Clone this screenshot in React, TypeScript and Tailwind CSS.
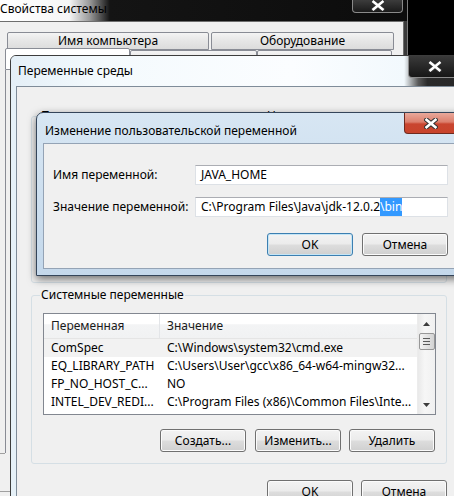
import React from 'react';

const FONT = "font-['Noto_Sans','Open_Sans',sans-serif]";

function CloseGlyph() {
  return (
    <svg width="14" height="11" viewBox="0 0 14 11">
      <path d="M2.5 1.8 L11.5 9.2 M11.5 1.8 L2.5 9.2" stroke="#2f2f2f" strokeWidth="4.6" strokeLinecap="square" />
      <path d="M2.5 1.8 L11.5 9.2 M11.5 1.8 L2.5 9.2" stroke="#ffffff" strokeWidth="2.6" strokeLinecap="square" />
    </svg>
  );
}

function Btn({ label, focused = false, className = '' }: { label: string; focused?: boolean; className?: string }) {
  return (
    <div
      className={`flex h-[23px] w-[86px] items-center justify-center rounded-[3px] border bg-[linear-gradient(180deg,#f3f3f3_0%,#ebebeb_48%,#dddddd_52%,#cfcfcf_100%)] text-[12px] leading-none text-black ${
        focused ? 'border-[#3c7fb1] shadow-[inset_0_0_0_1px_#c4e5f6]' : 'border-[#707070] shadow-[inset_0_0_0_1px_#fbfbfb]'
      } ${className}`}
    >
      {label}
    </div>
  );
}

function Group({ title, className = '', children }: { title: string; className?: string; children?: React.ReactNode }) {
  return (
    <div className={`relative rounded-[3px] border border-[#d5dfe5] ${className}`}>
      <span className="absolute left-[8px] top-[-9px] bg-[#f0f0f0] px-[1px] text-[12px] leading-[16px] text-black">{title}</span>
      {children}
    </div>
  );
}

const rows = [
  { name: 'ComSpec', value: 'C:\\Windows\\system32\\cmd.exe', hot: true },
  { name: 'EQ_LIBRARY_PATH', value: 'C:\\Users\\User\\gcc\\x86_64-w64-mingw32...' },
  { name: 'FP_NO_HOST_C...', value: 'NO' },
  { name: 'INTEL_DEV_REDI...', value: 'C:\\Program Files (x86)\\Common Files\\Inte...' },
];

function VarList() {
  return (
    <div className="flex h-[102px] w-[393px] border border-[#828790] bg-white">
      <div className="flex flex-1 flex-col overflow-hidden">
        <div className="flex h-[25px] shrink-0 items-center border-b border-[#e5e5e5] bg-[linear-gradient(180deg,#ffffff_0%,#ffffff_40%,#f3f4f5_45%,#f1f2f3_100%)] text-[12px] text-[#1a1a1a]">
          <div className="flex h-full w-[116px] items-center border-r border-[#e3e5e8] pl-[7px]">Переменная</div>
          <div className="pl-[7px]">Значение</div>
        </div>
        {rows.map((r) => (
          <div key={r.name} className={`flex h-[18px] shrink-0 items-center whitespace-nowrap text-[12px] text-black ${r.hot ? 'bg-[#f2f2f2]' : ''}`}>
            <div className="w-[116px] pl-[7px]">{r.name}</div>
            <div className="pl-[7px]">{r.value}</div>
          </div>
        ))}
      </div>
      <div className="flex w-[18px] flex-col items-center border-l border-[#ececec] bg-[linear-gradient(90deg,#e9e9e9,#f6f6f6_40%,#f0f0f0)]">
        <div className="flex h-[19px] w-full items-center justify-center">
          <svg width="7" height="4" viewBox="0 0 7 4"><path d="M0 4 L3.5 0 L7 4 Z" fill="#3c3c3c" /></svg>
        </div>
        <div className="flex h-[17px] w-[16px] flex-col items-center justify-center gap-[2px] rounded-[2px] border border-[#979797] bg-[linear-gradient(90deg,#f3f3f3,#e3e3e3_50%,#d3d3d3)]">
          <div className="h-px w-[7px] bg-[#5a5a5a]" />
          <div className="h-px w-[7px] bg-[#5a5a5a]" />
          <div className="h-px w-[7px] bg-[#5a5a5a]" />
        </div>
        <div className="flex-1" />
        <div className="flex h-[19px] w-full items-center justify-center">
          <svg width="7" height="4" viewBox="0 0 7 4"><path d="M0 0 L7 0 L3.5 4 Z" fill="#3c3c3c" /></svg>
        </div>
      </div>
    </div>
  );
}

function Tab({ label = '', className = '', selected = false }: { label?: string; className?: string; selected?: boolean }) {
  return (
    <div
      className={`flex items-center justify-center rounded-t-[2px] border border-[#898c95] text-[12px] text-black ${
        selected ? 'bg-white' : 'bg-[linear-gradient(180deg,#f4f4f4,#e6e6e6_50%,#dcdcdc)]'
      } ${className}`}
    >
      {label}
    </div>
  );
}

export default function App() {
  return (
    <div className={`relative h-[496px] w-[454px] overflow-hidden bg-black ${FONT}`}>
      {/* Свойства системы (back window) */}
      <div className="absolute left-0 top-0 flex h-[520px] w-[408px] flex-col border-r border-[#7b7b7b] bg-[#3a3a3a]">
        <div className="flex h-[21px] shrink-0 items-start bg-[linear-gradient(90deg,#ffffff_0%,#f6f6f6_17%,#9a9a9a_22%,#141414_27%,#0c0c0c_100%)] pt-[1px] text-[12px] leading-[16px] text-black">
          Свойства системы
        </div>
        <div className="absolute left-[352px] top-0 flex h-[13px] w-[51px] items-end justify-center rounded-b-[4px] border border-t-0 border-[#8a8a8a] bg-[linear-gradient(180deg,#3c3c3c,#1a1a1a)] pb-[1px]">
          <CloseGlyph />
        </div>
        <div className="mr-[3px] flex flex-1 flex-col border-t border-r border-[#6e6e6e] bg-[#f0f0f0]">
          <div className="ml-[7px] mt-[10px] flex gap-[2px]">
            <Tab label="Имя компьютера" className="h-[18px] w-[202px]" />
            <Tab label="Оборудование" className="h-[18px] w-[183px]" />
          </div>
          <div className="ml-[5px] -mt-[2px] flex">
            <Tab selected className="h-[22px] w-[125px]" />
            <Tab className="mt-[2px] h-[20px] w-[127px]" />
            <Tab className="mt-[2px] h-[20px] w-[135px]" />
          </div>
          <div className="ml-[5px] h-[383px] w-[388px] border-l border-r border-[#898c95]" />
          <div className="h-[38px] w-[5px] border-t border-[#a0a0a0]" />
          <div className="w-[10px] border-t border-[#a0a0a0]" />
        </div>
      </div>

      {/* Переменные среды */}
      <div className="absolute left-[10px] top-[55px] flex h-[470px] w-[470px] flex-col rounded-t-[6px] border border-[#3d3d3d] bg-[#e6f1f8]">
        <div className="flex h-[30px] shrink-0 items-center rounded-t-[5px] bg-[linear-gradient(90deg,#e4eff7_0%,#f4fafd_20%,#fbfdff_60%,#f2f9fd_84%,#5a5a5a_87%,#2a2a2a_89%,#262626_100%)] pl-[7px] text-[12px] text-black">
          Переменные среды
        </div>
        <div className="absolute left-[397px] top-0 flex h-[22px] w-[53px] items-center justify-center rounded-b-[4px] border border-t-0 border-[#8c8c8c] bg-[linear-gradient(180deg,#3a3a3a,#161616)]">
          <CloseGlyph />
        </div>
        <div className="ml-[5px] flex flex-1 flex-col border-l border-t border-[#7f8c99] bg-[#f0f0f0] pl-[14px]">
          <Group title="Переменные среды пользователя для User" className="mt-[29px] h-[167px] w-[416px]" />
          <Group title="Системные переменные" className="mt-[12px] flex h-[169px] w-[416px] flex-col pl-[11px] pt-[17px]">
            <VarList />
            <div className="mt-[14px] flex w-[392px] justify-end gap-[8px]">
              <Btn label="Создать..." className="mr-[1px]" />
              <Btn label="Изменить..." />
              <Btn label="Удалить" />
            </div>
          </Group>
          <div className="mt-[16px] flex w-[416px] justify-end gap-[8px]">
            <Btn label="OK" />
            <Btn label="Отмена" />
          </div>
        </div>
      </div>

      {/* Изменение пользовательской переменной */}
      <div className="absolute left-[36px] top-[112px] flex h-[164px] w-[440px] flex-col rounded-t-[7px] border border-[#34455a] bg-[linear-gradient(180deg,#d7e6f3,#c4d8eb)] shadow-[0_3px_8px_rgba(0,0,0,0.55)]">
        <div className="flex h-[30px] shrink-0 items-center pl-[8px] pt-[5px] text-[12px] text-black">
          Изменение пользовательской переменной
        </div>
        <div className="absolute left-[367px] top-0 flex h-[21px] w-[53px] items-center justify-center rounded-b-[4px] border border-t-0 border-[#6e2a1f] bg-[linear-gradient(180deg,#e9a99b_0%,#dc7f6d_45%,#c9452f_55%,#c8442c_100%)]">
          <CloseGlyph />
        </div>
        <div className="mb-[6px] ml-[6px] flex flex-1 flex-col border border-r-0 border-[#94a3b5] bg-[#f0f0f0] pl-[9px] pt-[21px]">
          <div className="grid w-[395px] grid-cols-[142px_253px] items-center gap-y-[12px] text-[12px] text-black">
            <span>Имя переменной:</span>
            <div className="flex h-[20px] items-center border border-[#dde1e6] border-t-[#abadb3] bg-white pl-[5px]">JAVA_HOME</div>
            <span>Значение переменной:</span>
            <div className="flex h-[20px] items-center whitespace-nowrap border border-[#dde1e6] border-t-[#abadb3] bg-white pl-[5px]">
              C:\Program Files\Java\jdk-12.0.2<span className="bg-[#3399ff] text-white">\bin</span>
            </div>
          </div>
          <div className="mt-[16px] flex w-[395px] justify-end gap-[9px]">
            <Btn label="OK" focused />
            <Btn label="Отмена" />
          </div>
        </div>
      </div>
    </div>
  );
}
